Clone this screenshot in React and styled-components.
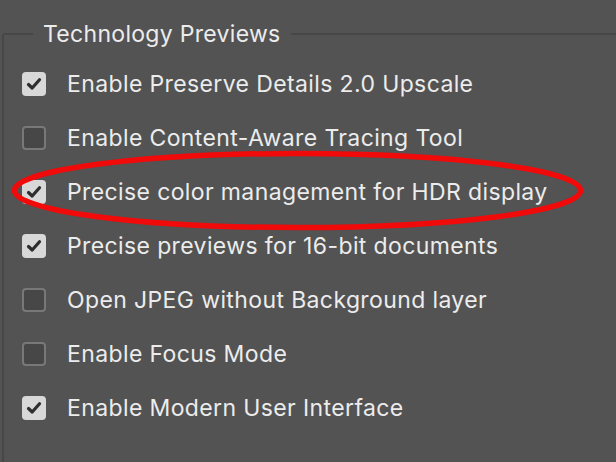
import React from "react";
import styled, { createGlobalStyle } from "styled-components";

const GlobalStyle = createGlobalStyle`
  html, body {
    margin: 0;
    padding: 0;
    background: #535353;
    overflow: hidden;
  }
  body {
    font-family: Inter, "Noto Sans", sans-serif;
  }
`;

const Page = styled.div`
  position: relative;
  width: 616px;
  height: 462px;
  padding-top: 21px;
  box-sizing: border-box;
  overflow: hidden;
`;

const Group = styled.fieldset`
  margin: 0 -40px 0 2px;
  padding: 25px 0 0 18px;
  border: 2px solid #474747;
  border-radius: 3px;
  height: 460px;
  box-sizing: border-box;
`;

const Legend = styled.legend`
  margin-left: 11px;
  padding: 0 10px;
  font-size: 23px;
  letter-spacing: 0.3px;
  color: #ececec;
  line-height: 26px;
`;

const List = styled.div`
  display: flex;
  flex-direction: column;
  gap: 30px;
`;

const Row = styled.label`
  display: flex;
  align-items: center;
  gap: 21px;
  height: 24px;
  font-size: 23px;
  letter-spacing: 0.38px;
  color: #ececec;
`;

const Box = styled.span`
  width: 24px;
  height: 24px;
  box-sizing: border-box;
  border-radius: 4px;
  flex: none;
  display: flex;
  align-items: center;
  justify-content: center;
  background: ${(p) => (p.$checked ? "#d8d8d8" : "#474747")};
  border: ${(p) => (p.$checked ? "none" : "2px solid #787878")};
`;

const Circle = styled.svg`
  position: absolute;
  left: 0;
  top: 0;
  pointer-events: none;
`;

const items = [
  ["Enable Preserve Details 2.0 Upscale", true],
  ["Enable Content-Aware Tracing Tool", false],
  ["Precise color management for HDR display", true],
  ["Precise previews for 16-bit documents", true],
  ["Open JPEG without Background layer", false],
  ["Enable Focus Mode", false],
  ["Enable Modern User Interface", true],
];

function Check() {
  return (
    <svg width="16" height="14" viewBox="0 0 16 14">
      <path
        d="M2.5 7.5 L6.2 11 L13.5 2.8"
        fill="none"
        stroke="#2e2e2e"
        strokeWidth="3.2"
        strokeLinecap="round"
        strokeLinejoin="round"
      />
    </svg>
  );
}

export default function App() {
  return (
    <>
      <GlobalStyle />
      <Page>
        <Group>
          <Legend>Technology Previews</Legend>
          <List>
            {items.map(([text, checked]) => (
              <Row key={text}>
                <Box $checked={checked}>{checked && <Check />}</Box>
                {text}
              </Row>
            ))}
          </List>
        </Group>
        <Circle width="616" height="462">
          <ellipse
            cx="297.5"
            cy="190.5"
            rx="283"
            ry="37"
            fill="none"
            stroke="#f00a0a"
            strokeWidth="5.5"
          />
        </Circle>
      </Page>
    </>
  );
}
